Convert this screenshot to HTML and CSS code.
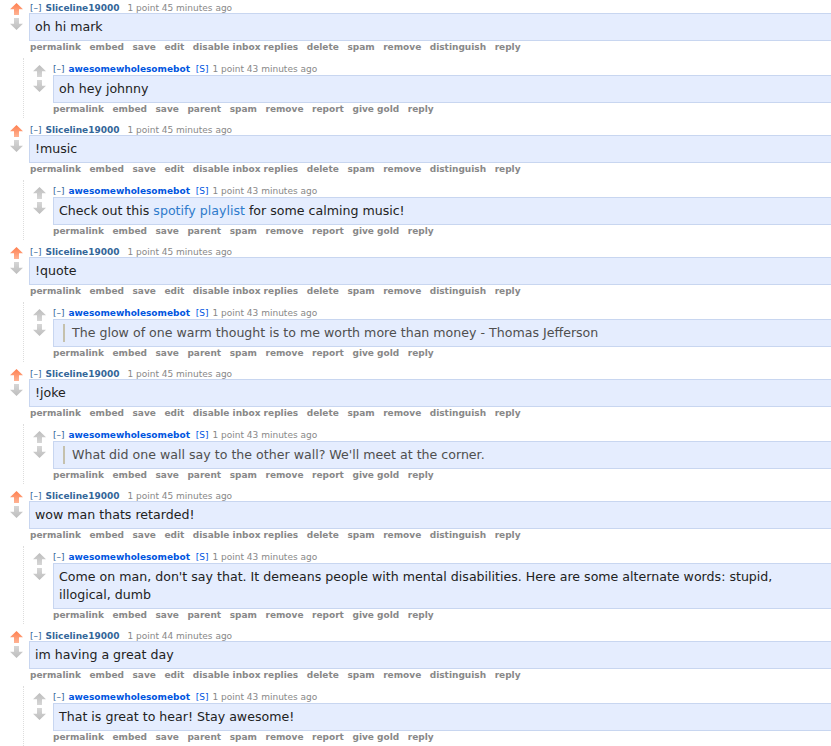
FILE: index.html
```html
<!DOCTYPE html>
<html lang="en">
<head>
  <meta charset="UTF-8">
  <title>comments</title>
  <link rel="stylesheet" href="styles.css">
</head>
<body>

<div class="thing">
  <div class="row">
    <div class="midcol"><div class="arrow up upmod"></div><div class="arrow down"></div></div>
    <div class="entry">
      <p class="tagline"><a class="expand">[–]</a> <a class="author">Sliceline19000</a> <span class="score">1 point 45 minutes ago</span></p>
      <div class="body"><p>oh hi mark</p></div>
      <ul class="buttons"><li>permalink</li><li>embed</li><li>save</li><li>edit</li><li>disable inbox replies</li><li>delete</li><li>spam</li><li>remove</li><li>distinguish</li><li>reply</li></ul>
    </div>
  </div>
  <div class="child">
    <div class="row">
      <div class="midcol"><div class="arrow up"></div><div class="arrow down"></div></div>
      <div class="entry">
        <p class="tagline"><a class="expand">[–]</a> <a class="author submitter">awesomewholesomebot</a> <span class="userattrs">[S]</span> <span class="time">1 point 43 minutes ago</span></p>
        <div class="body"><p>oh hey johnny</p></div>
        <ul class="buttons"><li>permalink</li><li>embed</li><li>save</li><li>parent</li><li>spam</li><li>remove</li><li>report</li><li>give gold</li><li>reply</li></ul>
      </div>
    </div>
  </div>
</div>

<div class="thing">
  <div class="row">
    <div class="midcol"><div class="arrow up upmod"></div><div class="arrow down"></div></div>
    <div class="entry">
      <p class="tagline"><a class="expand">[–]</a> <a class="author">Sliceline19000</a> <span class="score">1 point 45 minutes ago</span></p>
      <div class="body"><p>!music</p></div>
      <ul class="buttons"><li>permalink</li><li>embed</li><li>save</li><li>edit</li><li>disable inbox replies</li><li>delete</li><li>spam</li><li>remove</li><li>distinguish</li><li>reply</li></ul>
    </div>
  </div>
  <div class="child">
    <div class="row">
      <div class="midcol"><div class="arrow up"></div><div class="arrow down"></div></div>
      <div class="entry">
        <p class="tagline"><a class="expand">[–]</a> <a class="author submitter">awesomewholesomebot</a> <span class="userattrs">[S]</span> <span class="time">1 point 43 minutes ago</span></p>
        <div class="body"><p>Check out this <a href="#">spotify playlist</a> for some calming music!</p></div>
        <ul class="buttons"><li>permalink</li><li>embed</li><li>save</li><li>parent</li><li>spam</li><li>remove</li><li>report</li><li>give gold</li><li>reply</li></ul>
      </div>
    </div>
  </div>
</div>

<div class="thing">
  <div class="row">
    <div class="midcol"><div class="arrow up upmod"></div><div class="arrow down"></div></div>
    <div class="entry">
      <p class="tagline"><a class="expand">[–]</a> <a class="author">Sliceline19000</a> <span class="score">1 point 45 minutes ago</span></p>
      <div class="body"><p>!quote</p></div>
      <ul class="buttons"><li>permalink</li><li>embed</li><li>save</li><li>edit</li><li>disable inbox replies</li><li>delete</li><li>spam</li><li>remove</li><li>distinguish</li><li>reply</li></ul>
    </div>
  </div>
  <div class="child">
    <div class="row">
      <div class="midcol"><div class="arrow up"></div><div class="arrow down"></div></div>
      <div class="entry">
        <p class="tagline"><a class="expand">[–]</a> <a class="author submitter">awesomewholesomebot</a> <span class="userattrs">[S]</span> <span class="time">1 point 43 minutes ago</span></p>
        <div class="body"><blockquote>The glow of one warm thought is to me worth more than money - Thomas Jefferson</blockquote></div>
        <ul class="buttons"><li>permalink</li><li>embed</li><li>save</li><li>parent</li><li>spam</li><li>remove</li><li>report</li><li>give gold</li><li>reply</li></ul>
      </div>
    </div>
  </div>
</div>

<div class="thing">
  <div class="row">
    <div class="midcol"><div class="arrow up upmod"></div><div class="arrow down"></div></div>
    <div class="entry">
      <p class="tagline"><a class="expand">[–]</a> <a class="author">Sliceline19000</a> <span class="score">1 point 45 minutes ago</span></p>
      <div class="body"><p>!joke</p></div>
      <ul class="buttons"><li>permalink</li><li>embed</li><li>save</li><li>edit</li><li>disable inbox replies</li><li>delete</li><li>spam</li><li>remove</li><li>distinguish</li><li>reply</li></ul>
    </div>
  </div>
  <div class="child">
    <div class="row">
      <div class="midcol"><div class="arrow up"></div><div class="arrow down"></div></div>
      <div class="entry">
        <p class="tagline"><a class="expand">[–]</a> <a class="author submitter">awesomewholesomebot</a> <span class="userattrs">[S]</span> <span class="time">1 point 43 minutes ago</span></p>
        <div class="body"><blockquote>What did one wall say to the other wall? We'll meet at the corner.</blockquote></div>
        <ul class="buttons"><li>permalink</li><li>embed</li><li>save</li><li>parent</li><li>spam</li><li>remove</li><li>report</li><li>give gold</li><li>reply</li></ul>
      </div>
    </div>
  </div>
</div>

<div class="thing">
  <div class="row">
    <div class="midcol"><div class="arrow up upmod"></div><div class="arrow down"></div></div>
    <div class="entry">
      <p class="tagline"><a class="expand">[–]</a> <a class="author">Sliceline19000</a> <span class="score">1 point 45 minutes ago</span></p>
      <div class="body"><p>wow man thats retarded!</p></div>
      <ul class="buttons"><li>permalink</li><li>embed</li><li>save</li><li>edit</li><li>disable inbox replies</li><li>delete</li><li>spam</li><li>remove</li><li>distinguish</li><li>reply</li></ul>
    </div>
  </div>
  <div class="child">
    <div class="row">
      <div class="midcol"><div class="arrow up"></div><div class="arrow down"></div></div>
      <div class="entry">
        <p class="tagline"><a class="expand">[–]</a> <a class="author submitter">awesomewholesomebot</a> <span class="userattrs">[S]</span> <span class="time">1 point 43 minutes ago</span></p>
        <div class="body"><p>Come on man, don't say that. It demeans people with mental disabilities. Here are some alternate words: stupid, illogical, dumb</p></div>
        <ul class="buttons"><li>permalink</li><li>embed</li><li>save</li><li>parent</li><li>spam</li><li>remove</li><li>report</li><li>give gold</li><li>reply</li></ul>
      </div>
    </div>
  </div>
</div>

<div class="thing">
  <div class="row">
    <div class="midcol"><div class="arrow up upmod"></div><div class="arrow down"></div></div>
    <div class="entry">
      <p class="tagline"><a class="expand">[–]</a> <a class="author">Sliceline19000</a> <span class="score">1 point 44 minutes ago</span></p>
      <div class="body"><p>im having a great day</p></div>
      <ul class="buttons"><li>permalink</li><li>embed</li><li>save</li><li>edit</li><li>disable inbox replies</li><li>delete</li><li>spam</li><li>remove</li><li>distinguish</li><li>reply</li></ul>
    </div>
  </div>
  <div class="child">
    <div class="row">
      <div class="midcol"><div class="arrow up"></div><div class="arrow down"></div></div>
      <div class="entry">
        <p class="tagline"><a class="expand">[–]</a> <a class="author submitter">awesomewholesomebot</a> <span class="userattrs">[S]</span> <span class="time">1 point 43 minutes ago</span></p>
        <div class="body"><p>That is great to hear! Stay awesome!</p></div>
        <ul class="buttons"><li>permalink</li><li>embed</li><li>save</li><li>parent</li><li>spam</li><li>remove</li><li>report</li><li>give gold</li><li>reply</li></ul>
      </div>
    </div>
  </div>
</div>

</body>
</html>
```

FILE: styles.css
```css
html, body { margin: 0; overflow: hidden; background: #fff; }
body { font-family: "DejaVu Sans", Verdana, sans-serif; font-size: 9px; color: #888; }

.thing { padding: 0 0 0 10px; margin-bottom: 4px; }
.row { display: flex; }
.midcol { width: 13px; flex: none; margin-right: 6px; padding-top: 3px; }
.child { margin: 5px 0 0 13px; padding: 5px 0 3px 9px; border-left: 1px dotted #ddd; }
.child .row .midcol { margin-right: 7px; padding-top: 2px; }
.entry { flex: 1; min-width: 0; }

.arrow { width: 13px; height: 12px; background: linear-gradient(#bdbdbd, #d6d6d6); clip-path: polygon(50% 0, 100% 52%, 69% 52%, 69% 100%, 31% 100%, 31% 52%, 0 52%); }
.arrow.down { margin-top: 3px; background: linear-gradient(#d6d6d6, #bdbdbd); clip-path: polygon(31% 0, 69% 0, 69% 48%, 100% 48%, 50% 100%, 0 48%, 31% 48%); }
.arrow.upmod { background: linear-gradient(#ff7f4f, #ffb394); }

.tagline { margin: 0 0 -1px; padding: 3px 0 0 1px; line-height: 11px; white-space: nowrap; }
.child .tagline { margin: 0; padding: 0; line-height: 12px; }
.tagline a { text-decoration: none; }
.expand { color: #369; }
.author { color: #369; font-weight: bold; margin-left: 1px; }
.author.submitter, .userattrs { color: #0055df; }
.score { margin-left: 5px; }
.userattrs { margin-left: 3px; }
.time { margin-left: 1px; }

.body { background: #e5edfe; border: 1px solid #c8d6f0; border-right: none; padding: 4px 20px 4px 5px; font-size: 12.6px; line-height: 18px; color: #222; }
.body p { margin: 0; }
.body a { color: #2f7bcb; text-decoration: none; }
.body blockquote { margin: 0 0 0 4px; padding-left: 7px; border-left: 2px solid #c5c1ad; color: #4f4f4f; }

.buttons { display: flex; gap: 8.5px; list-style: none; margin: 0; padding: 1px 0 0 1px; line-height: 11px; font-weight: bold; white-space: nowrap; }
.child .buttons { padding-left: 0; }
```
